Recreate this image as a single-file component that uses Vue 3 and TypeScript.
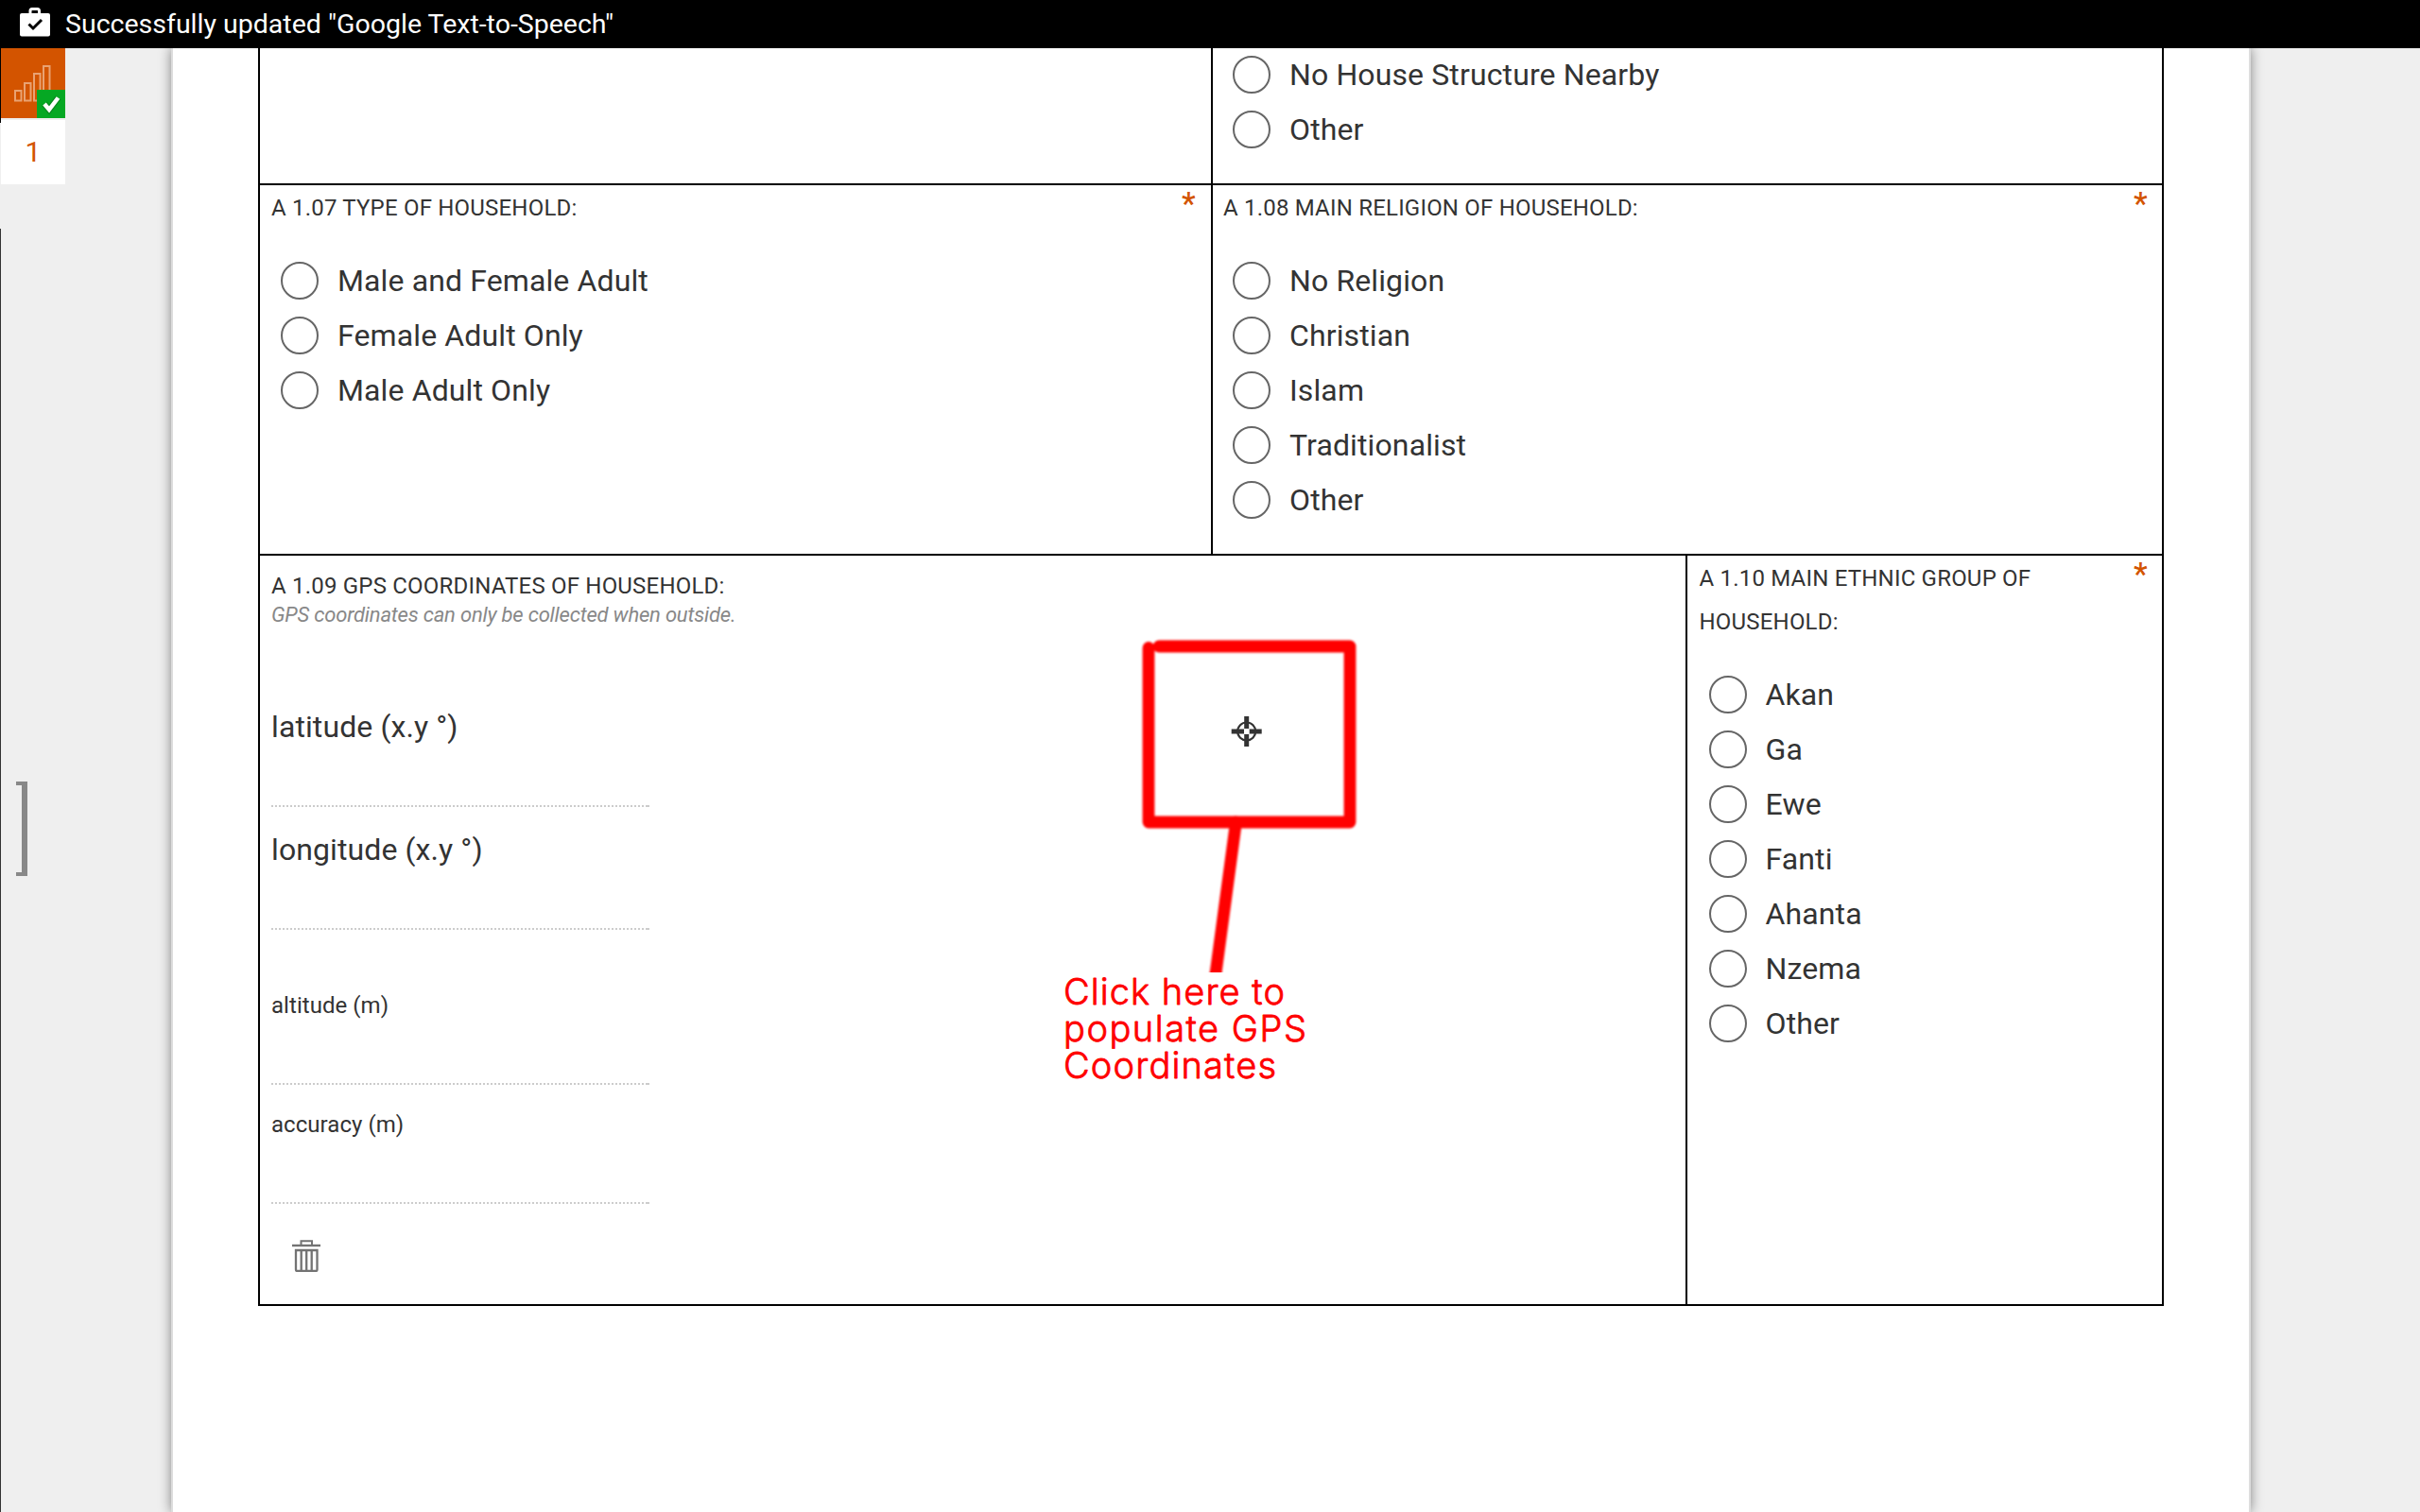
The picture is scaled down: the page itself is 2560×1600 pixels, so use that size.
<script setup lang="ts">
interface Field {
  label: string
  kind: 'large' | 'small'
}

const structureOptions: string[] = ['No House Structure Nearby', 'Other']
const householdOptions: string[] = ['Male and Female Adult', 'Female Adult Only', 'Male Adult Only']
const religionOptions: string[] = ['No Religion', 'Christian', 'Islam', 'Traditionalist', 'Other']
const ethnicOptions: string[] = ['Akan', 'Ga', 'Ewe', 'Fanti', 'Ahanta', 'Nzema', 'Other']
const fields: Field[] = [
  { label: 'latitude (x.y °)', kind: 'large' },
  { label: 'longitude (x.y °)', kind: 'large' },
  { label: 'altitude (m)', kind: 'small' },
  { label: 'accuracy (m)', kind: 'small' },
]
</script>

<template>
  <div class="screen">
    <header class="statusbar">
      <svg class="bag" width="32" height="31" viewBox="0 0 32 31">
        <path d="M11 7V3.5Q11 1.5 13 1.5H18.5Q20.500 1.500 20.500 3.500V7" fill="none" stroke="#fff" stroke-width="3" />
        <rect x="0" y="6" width="32" height="24.500" rx="2" fill="#fff" />
        <path d="M9.500 17.500L14 22L23 13" fill="none" stroke="#000" stroke-width="3" />
      </svg>
      <span class="status-text">Successfully updated "Google Text-to-Speech"</span>
    </header>

    <main class="main">
      <aside class="rail">
        <div class="edge">
          <i class="edge-top"></i>
          <i class="edge-bottom"></i>
        </div>
        <div class="tabs">
          <div class="tile">
            <svg width="68" height="74" viewBox="0 0 68 74">
              <g fill="none" stroke="#e9a272" stroke-width="2">
                <rect x="15" y="45" width="6.500" height="10.500" />
                <rect x="25" y="37" width="6.500" height="18.500" />
                <rect x="35" y="27" width="6.500" height="28.500" />
                <rect x="45" y="19" width="6.500" height="36.500" />
              </g>
              <rect x="38" y="44" width="30" height="30" fill="#05a823" />
              <path d="M46 59L51 65L60.500 52.500" fill="none" stroke="#0b6a1c" stroke-opacity=".5" stroke-width="7" />
              <path d="M46 59L51 65L60.500 52.500" fill="none" stroke="#fff" stroke-width="4.500" />
            </svg>
          </div>
          <div class="page-number">1</div>
          <div class="bracket"></div>
        </div>
      </aside>

      <section class="page">
        <div class="sheet">
          <div class="row first">
            <div class="cell half"></div>
            <div class="cell half">
              <div v-for="o in structureOptions" :key="o" class="option"><i class="radio"></i><span>{{ o }}</span></div>
            </div>
          </div>

          <div class="row second">
            <div class="cell half">
              <div class="head">
                <h2>A 1.07 TYPE OF HOUSEHOLD:</h2>
                <b class="required">*</b>
              </div>
              <div v-for="o in householdOptions" :key="o" class="option"><i class="radio"></i><span>{{ o }}</span></div>
            </div>
            <div class="cell half">
              <div class="head">
                <h2>A 1.08 MAIN RELIGION OF HOUSEHOLD:</h2>
                <b class="required">*</b>
              </div>
              <div v-for="o in religionOptions" :key="o" class="option"><i class="radio"></i><span>{{ o }}</span></div>
            </div>
          </div>

          <div class="row third">
            <div class="cell gps">
              <h2 class="tight">A 1.09 GPS COORDINATES OF HOUSEHOLD:</h2>
              <p class="hint">GPS coordinates can only be collected when outside.</p>
              <div class="fields">
                <div v-for="f in fields" :key="f.label" class="field" :class="f.kind">
                  <label>{{ f.label }}</label>
                  <div class="line"></div>
                </div>
              </div>
              <svg class="trash" width="30" height="34" viewBox="0 0 30 34">
                <g fill="none" stroke="#737373" stroke-width="2">
                  <path d="M9.500 5V1.200H21V5" />
                  <path d="M0 6H30" stroke-width="2.400" />
                  <path d="M4 11H26.500V31.500Q26.500 33 25 33H5.500Q4 33 4 31.500Z" stroke-width="2.300" />
                  <path d="M9.700 11V33M15.200 11V33M20.700 11V33" stroke-width="2.300" />
                </g>
              </svg>
              <svg class="note" width="320" height="490" viewBox="1110 670 320 490">
                <defs>
                  <clipPath id="pointer-end"><rect x="1200" y="660" width="250" height="369" /></clipPath>
                  <filter id="soft" x="-10%" y="-10%" width="120%" height="120%"><feGaussianBlur stdDeviation=".8" /></filter>
                </defs>
                <g clip-path="url(#pointer-end)">
                  <g filter="url(#soft)" fill="none" stroke="#f00" stroke-width="12.800" stroke-linecap="round" stroke-linejoin="round">
                    <path d="M1226 684H1428V870H1215V685.500" />
                    <path d="M1307.500 870L1284.700 1040" />
                  </g>
                </g>
                <g fill="none" stroke="#333">
                  <circle cx="1318.700" cy="774" r="9.500" stroke-width="2.200" />
                  <path d="M1302.700 774H1316M1321.500 774H1334.700M1318.700 758V771.200M1318.700 776.800V790" stroke-width="5" />
                </g>
                <rect x="1316" y="771.300" width="5.400" height="5.400" fill="#fff" />
                <g class="note-text">
                  <text x="1125" y="1062.500" textLength="234">Click here to</text>
                  <text x="1125" y="1101.500" textLength="257">populate GPS</text>
                  <text x="1125" y="1140.500" textLength="225">Coordinates</text>
                </g>
              </svg>
            </div>
            <div class="cell ethnic">
              <div class="head">
                <h2>A 1.10 MAIN ETHNIC GROUP OF HOUSEHOLD:</h2>
                <b class="required">*</b>
              </div>
              <div v-for="o in ethnicOptions" :key="o" class="option"><i class="radio"></i><span>{{ o }}</span></div>
            </div>
          </div>
        </div>
      </section>
    </main>
  </div>
</template>

<style>
body {
  margin: 0;
  background: #efefef;
}
</style>

<style scoped>
.screen {
  width: 2560px;
  height: 1600px;
  overflow: hidden;
  display: flex;
  flex-direction: column;
  background: #efefef;
  color: #333;
  font-family: Roboto, "Liberation Sans", sans-serif;
}
.statusbar {
  position: relative;
  z-index: 1;
  height: 51px;
  flex: none;
  background: #000;
  color: #fff;
  display: flex;
  align-items: center;
}
.bag {
  margin: 0 16px 5px 21px;
}
.status-text {
  font-size: 28.5px;
  line-height: 50px;
  white-space: nowrap;
}
.main {
  display: flex;
  height: 1549px;
}
.rail {
  width: 181px;
  flex: none;
  display: flex;
}
.edge {
  width: 1px;
  display: flex;
  flex-direction: column;
  justify-content: space-between;
}
.edge-top {
  height: 79px;
  background: #000;
}
.edge-bottom {
  height: 1358px;
  background: #333;
}
.tile {
  width: 68px;
  height: 74px;
  background: #d35400;
}
.tile svg {
  display: block;
}
.page-number {
  width: 68px;
  height: 68px;
  margin-top: 2px;
  background: #fff;
  color: #d35400;
  font-size: 30px;
  line-height: 68px;
  text-align: center;
}
.bracket {
  width: 6px;
  height: 92px;
  margin: 632px 0 0 16px;
  border: solid #888;
  border-width: 4px 6px 4px 0;
}
.page {
  box-sizing: border-box;
  width: 2200px;
  flex: none;
  padding-left: 90px;
  background: #fff;
  border: solid #ddd;
  border-width: 0 2px;
  box-shadow: 0 0 12px rgba(0, 0, 0, 0.45);
}
.sheet {
  box-sizing: border-box;
  width: 2016px;
  border-left: 2px solid #000;
}
.row {
  box-sizing: border-box;
  display: flex;
  border-bottom: 2px solid #000;
}
.first {
  height: 145px;
}
.second {
  height: 392px;
}
.third {
  height: 794px;
}
.cell {
  position: relative;
  box-sizing: border-box;
  padding: 0 12px;
  border-right: 2px solid #000;
}
.half {
  width: 1008px;
}
.half:last-child {
  width: 1006px;
  padding: 0 11px;
}
.gps {
  width: 1510px;
  padding-top: 17px;
}
.ethnic {
  width: 504px;
  padding: 0 11px 0 12.5px;
}
.head {
  display: flex;
  justify-content: space-between;
  padding-top: 1px;
  margin-bottom: 25px;
}
.first .option:first-child {
  margin-top: -1px;
}
h2 {
  margin: 0;
  font-size: 24px;
  font-weight: 400;
  line-height: 46px;
  letter-spacing: 0.2px;
}
h2.tight {
  line-height: 30px;
}
.required {
  flex: none;
  width: 13px;
  margin: 0 6px 0 60px;
  color: #d35400;
  font-size: 33px;
  line-height: 38px;
  font-weight: 500;
  height: 38px;
}
.option {
  display: flex;
  align-items: center;
  height: 58px;
  font-size: 32px;
  line-height: 58px;
  letter-spacing: 0.12px;
  white-space: nowrap;
}
.radio {
  box-sizing: border-box;
  width: 40px;
  height: 40px;
  margin: 0 20px 0 10px;
  border: 2px solid #666;
  border-radius: 50%;
}
.hint {
  margin: 0;
  color: #888;
  font-size: 22px;
  font-style: italic;
  line-height: 32px;
  letter-spacing: -0.2px;
}
.fields {
  width: 400px;
  padding-top: 79px;
}
.field label {
  display: block;
  line-height: 46px;
}
.large label {
  font-size: 32px;
  letter-spacing: 0.1px;
}
.small label {
  font-size: 24px;
  letter-spacing: 0.05px;
}
.large + .large {
  margin-top: 22px;
}
.large + .small {
  margin-top: 57px;
}
.small + .small {
  margin-top: 19px;
}
.line {
  height: 2px;
  background:
    linear-gradient(#ccc, #ccc) right / 4px 2px no-repeat,
    repeating-linear-gradient(90deg, #ccc 0 2px, transparent 2px 4px);
}
.large .line {
  margin-top: 60px;
}
.small .line {
  margin-top: 59px;
}
.trash {
  display: block;
  margin: 38px 0 0 22px;
}
.note {
  position: absolute;
  left: 835px;
  top: 82px;
  overflow: visible;
}
.note-text {
  fill: #f00;
  stroke: #f00;
  stroke-width: 0.8px;
  stroke-linejoin: round;
  font-family: Inter, "Liberation Sans", sans-serif;
  font-size: 38px;
  font-weight: 300;
}
</style>
